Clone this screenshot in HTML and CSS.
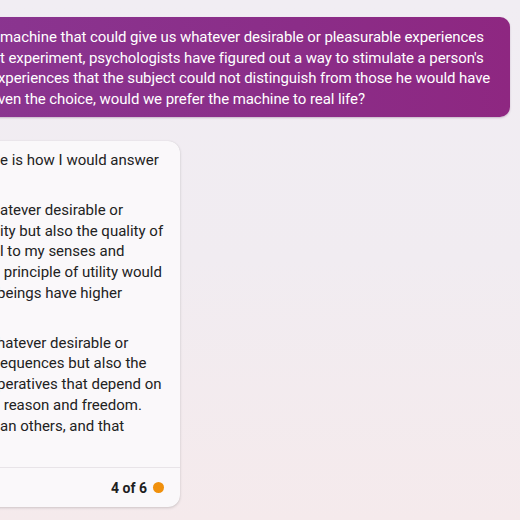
FILE: index.html
```html
<!DOCTYPE html>
<html>
<head>
<meta charset="utf-8">
<link rel="stylesheet" href="styles.css">
</head>
<body>
<div class="page">
  <div class="bubble">
    <div class="line">machine that could give us whatever desirable or pleasurable experiences</div>
    <div class="line">t experiment, psychologists have figured out a way to stimulate a person's</div>
    <div class="line cut2">xperiences that the subject could not distinguish from those he would have</div>
    <div class="line cut2">ven the choice, would we prefer the machine to real life?</div>
  </div>
  <div class="card">
    <div class="body">
      <p class="para">
        <span class="line">e is how I would answer</span>
      </p>
      <p class="para">
        <span class="line">atever desirable or</span>
        <span class="line">ity but also the quality of</span>
        <span class="line">l to my senses and</span>
        <span class="line">&nbsp;principle of utility would</span>
        <span class="line cut3">beings have higher</span>
      </p>
      <p class="para">
        <span class="line cut3">hatever desirable or</span>
        <span class="line">equences but also the</span>
        <span class="line cut3">peratives that depend on</span>
        <span class="line">&nbsp;reason and freedom.</span>
        <span class="line">an others, and that</span>
      </p>
    </div>
    <div class="footer">
      <span class="count">4 of 6</span>
      <span class="dot"></span>
    </div>
  </div>
</div>
</body>
</html>
```

FILE: styles.css
```css
html, body {
  margin: 0;
  padding: 0;
}
body {
  width: 520px;
  height: 520px;
  overflow: hidden;
  background: linear-gradient(180deg, #f1edf3 0%, #f1ecf1 50%, #f5eaec 100%);
  font-family: Roboto, "Noto Sans", sans-serif;
}
.page {
  padding-top: 17px;
}
.bubble {
  margin-left: -20px;
  width: 530px;
  box-sizing: border-box;
  padding: 10px 0 8px 20px;
  border-radius: 10px;
  background: linear-gradient(90deg, #8a3590 0%, #8b2d88 60%, #8e2781 100%);
  color: #ffffff;
  font-size: 15px;
  letter-spacing: -0.08px;
  line-height: 20.5px;
  white-space: nowrap;
  overflow: hidden;
  box-shadow: 0 1px 2px rgba(80, 20, 80, 0.25);
}
.bubble .line {
  display: block;
}
.cut2 {
  margin-left: -2px;
}
.cut3 {
  margin-left: -3px;
}
.card {
  margin-top: 24px;
  margin-left: -20px;
  width: 200px;
  height: 366px;
  box-sizing: border-box;
  border-radius: 12px;
  background: #faf8fa;
  box-shadow: 0 1px 3px rgba(0, 0, 0, 0.16), 0 0 1px rgba(0, 0, 0, 0.1);
  display: flex;
  flex-direction: column;
  overflow: hidden;
}
.body {
  flex: 1;
  padding: 9px 0 0 20px;
  color: #222222;
  font-size: 15px;
  line-height: 20.75px;
  white-space: nowrap;
}
.para {
  margin: 0 0 29px 0;
}
.para .line {
  display: block;
}
.footer {
  height: 39px;
  border-top: 1px solid #e8e4e8;
  display: flex;
  align-items: center;
  justify-content: flex-end;
  gap: 6px;
  padding-right: 16px;
}
.count {
  font-size: 14px;
  font-weight: 700;
  color: #1e1e1e;
}
.dot {
  width: 11px;
  height: 11px;
  border-radius: 50%;
  background: #f0900c;
}
```
